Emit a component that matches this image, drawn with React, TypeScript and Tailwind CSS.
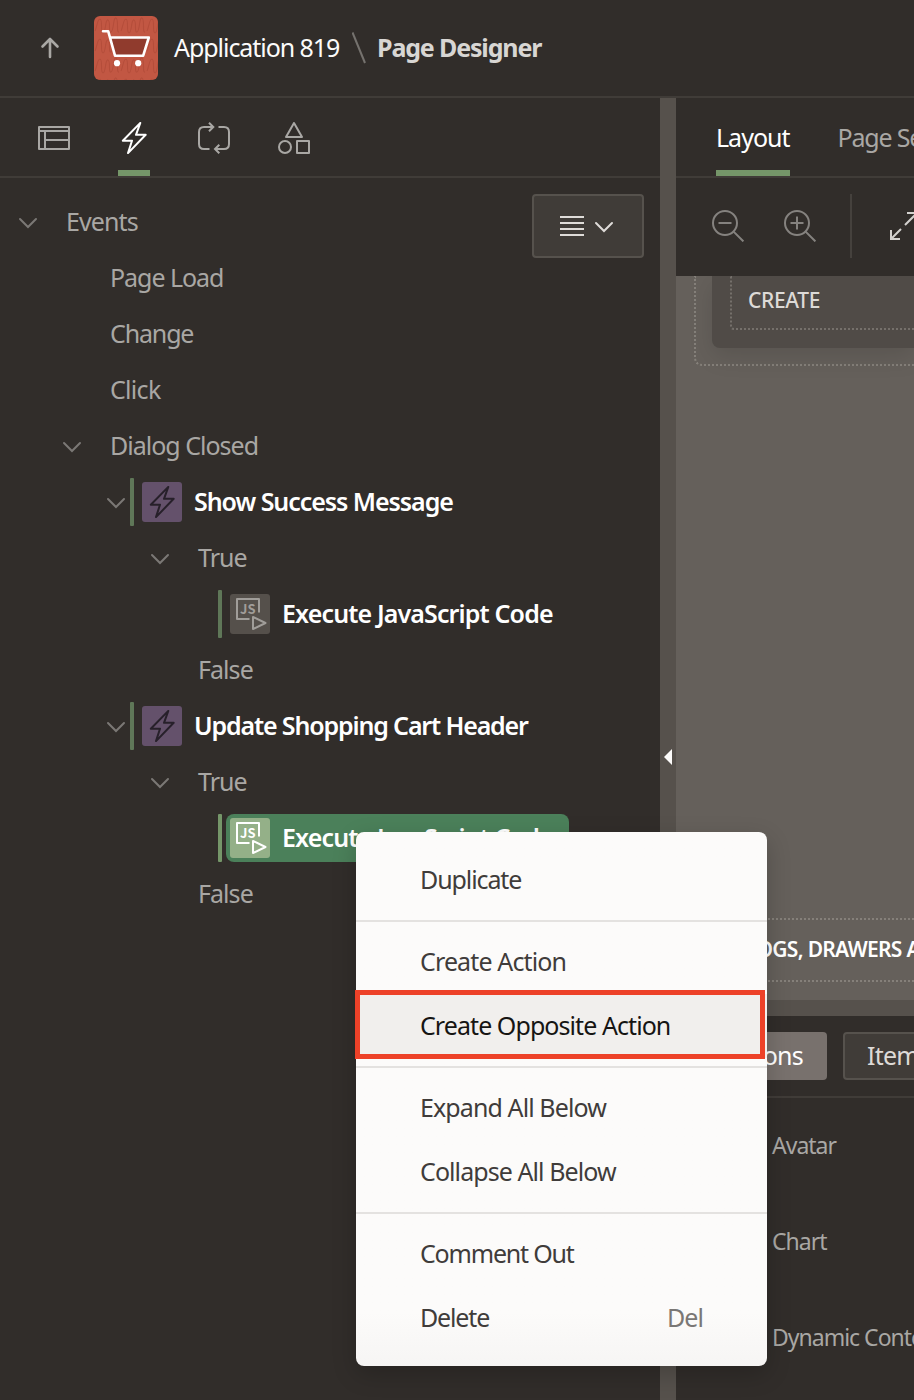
import type { ReactNode } from "react";

function Bolt({ className }: { className: string }) {
  return (
    <svg viewBox="0 0 32 32" className={className} fill="none" stroke="currentColor" strokeWidth="2" strokeLinejoin="round">
      <path d="M22.3.9 18 12.800h9.700L10 31.100l4-12.400H4.800Z" />
    </svg>
  );
}

function LayoutIcon() {
  return (
    <svg viewBox="0 0 32 32" className="size-8" fill="none" stroke="currentColor" strokeWidth="2" strokeLinejoin="round">
      <path d="M1 5h30v22H1ZM1 9h30M7 9v18M7 18h24" />
    </svg>
  );
}

function LoopIcon() {
  return (
    <svg viewBox="0 0 32 32" className="size-8" fill="none" stroke="currentColor" strokeWidth="2">
      <path d="M15 5H6Q1 5 1 10v12q0 5 5 5h5.500M11 .700 15.300 5 11 9.300M20.500 5H26q5 0 5 5v12q0 5-5 5h-9M21.300 22.700 17 27l4.300 4.300" />
    </svg>
  );
}

function ShapesIcon() {
  return (
    <svg viewBox="0 0 32 32" className="size-8" fill="none" stroke="currentColor" strokeWidth="2" strokeLinejoin="round">
      <path d="m16 1 8 14H8ZM19 19h12v12H19Z" />
      <circle cx="7" cy="25" r="6" />
    </svg>
  );
}

function Chevron({ className = "" }: { className?: string }) {
  return (
    <svg viewBox="0 0 20 12" className={`h-3 w-5 shrink-0 ${className}`} fill="none" stroke="currentColor" strokeWidth="2" strokeLinecap="round">
      <path d="m2 2 8 8 8-8" />
    </svg>
  );
}

function CartTile() {
  return (
    <svg viewBox="0 0 64 64" className="size-16 rounded-md bg-[#c25743]">
      <defs>
        <pattern id="grain" width="26" height="20" patternUnits="userSpaceOnUse">
          <path
            d="M1 15c2-3 2-12 5-12s0 14 3 14 2-14 5-13 0 13 3 12 2-15 5-14 0 15 3 14"
            fill="none"
            stroke="#b54d3a"
            strokeWidth="1.200"
          />
        </pattern>
      </defs>
      <rect width="64" height="64" fill="url(#grain)" />
      <path d="M15 21.500h39.500L49 39.500H21Z" fill="#903b2d" />
      <path
        d="M9 15.200h5.200L21 39.700h28.200l5.600-18.200H16.500"
        fill="none"
        stroke="#fff"
        strokeWidth="2.600"
        strokeLinecap="round"
        strokeLinejoin="round"
      />
      <circle cx="23" cy="47.200" r="3.100" fill="#fff" />
      <circle cx="44.200" cy="47.200" r="3.100" fill="#fff" />
    </svg>
  );
}

function ScriptTile({ className }: { className: string }) {
  return (
    <svg viewBox="0 0 40 40" className={`size-10 shrink-0 rounded-[3px] ${className}`} fill="none" stroke="currentColor" strokeWidth="2" strokeLinejoin="round">
      <path d="M29 18.500V5H7v20h12.500M23 23v12l12.500-6Z" />
      <text x="10" y="20" className="font-['Noto_Sans_CJK_SC',sans-serif] text-[13px] font-bold" fill="currentColor" stroke="none">
        JS
      </text>
    </svg>
  );
}

function BoltTile() {
  return (
    <div className="flex size-10 shrink-0 items-center justify-center rounded-[3px] bg-[#64516b]">
      <Bolt className="size-8 text-[#27202a]" />
    </div>
  );
}

function Zoom({ plus }: { plus?: boolean }) {
  return (
    <svg viewBox="0 0 32 32" className="size-8 shrink-0 text-[#85827f]" fill="none" stroke="currentColor" strokeWidth="2">
      <circle cx="13" cy="13" r="12" />
      <path d="m21.600 21.600 9.800 9.800M6.500 13h13" />
      {plus && <path d="M13 6.500v13" />}
    </svg>
  );
}

function Row({ indent, open, children }: { indent: string; open?: boolean; children: ReactNode }) {
  return (
    <div className={`flex h-14 items-center ${indent}`}>
      <div className="flex w-5 shrink-0 justify-center">{open && <Chevron className="mt-0.5 text-[#7b7875]" />}</div>
      {children}
    </div>
  );
}

function Label({ className, children }: { className: string; children: ReactNode }) {
  return <span className={`-mt-0.5 ml-7 ${className}`}>{children}</span>;
}

function Title({ className, children }: { className: string; children: ReactNode }) {
  return <span className={`-mt-0.5 ml-3 font-semibold text-white ${className}`}>{children}</span>;
}

function Bar({ className }: { className: string }) {
  return <div className={`ml-1 h-12 w-1 shrink-0 rounded-[1px] ${className}`} />;
}

function Tree() {
  return (
    <div className="flex flex-col">
      <Row indent="pl-[18px]" open><Label className="tracking-[-0.9px]">Events</Label></Row>
      <Row indent="pl-[62px]"><Label className="tracking-[-1.05px]">Page Load</Label></Row>
      <Row indent="pl-[62px]"><Label className="tracking-[-1.15px]">Change</Label></Row>
      <Row indent="pl-[62px]"><Label className="tracking-[-0.7px]">Click</Label></Row>
      <Row indent="pl-[62px]" open><Label className="tracking-[-1px]">Dialog Closed</Label></Row>
      <Row indent="pl-[106px]" open>
        <Bar className="mr-2 bg-[#5f7758]" />
        <BoltTile />
        <Title className="tracking-[-1.05px]">Show Success Message</Title>
      </Row>
      <Row indent="pl-[150px]" open><Label className="tracking-[-1px]">True</Label></Row>
      <Row indent="pl-[194px]">
        <Bar className="mr-2 bg-[#5f7758]" />
        <ScriptTile className="bg-[#55504b] text-[#a09d99]" />
        <Title className="tracking-[-0.87px]">Execute JavaScript Code</Title>
      </Row>
      <Row indent="pl-[150px]"><Label className="tracking-[-0.95px]">False</Label></Row>
      <Row indent="pl-[106px]" open>
        <Bar className="mr-2 bg-[#5f7758]" />
        <BoltTile />
        <Title className="tracking-[-1.15px]">Update Shopping Cart Header</Title>
      </Row>
      <Row indent="pl-[150px]" open><Label className="tracking-[-1px]">True</Label></Row>
      <Row indent="pl-[194px]">
        <Bar className="mr-1 bg-[#759669]" />
        <div className="flex h-12 w-[343px] shrink-0 items-center rounded-lg bg-[#4b805a] pl-1">
          <ScriptTile className="bg-[#94b088] text-white" />
          <Title className="tracking-[-0.87px]">Execute JavaScript Code</Title>
        </div>
      </Row>
      <Row indent="pl-[150px]"><Label className="tracking-[-0.95px]">False</Label></Row>
    </div>
  );
}

function Item({ label, tracking, hint, active }: { label: string; tracking: string; hint?: string; active?: boolean }) {
  return (
    <div className={`flex h-16 items-center justify-between px-16 pb-0.5 ${active ? "bg-[#f1efed] text-[#161513]" : ""}`}>
      <span className={tracking}>{label}</span>
      {hint && <span className="tracking-[-0.9px] text-[#7a7775]">{hint}</span>}
    </div>
  );
}

function Separator() {
  return <div className="my-2 h-0.5 bg-[#e4e2e0]" />;
}

function ContextMenu() {
  return (
    <div className="absolute left-[356px] top-[832px] w-[411px] rounded-lg bg-[#fcfbfa] bg-linear-to-b from-[#fcfbfa] from-90% to-[#f6f5f4] py-4 text-[#403c3a] shadow-[0_8px_24px_rgba(0,0,0,0.2)]">
      <Item label="Duplicate" tracking="tracking-[-1.1px]" />
      <Separator />
      <Item label="Create Action" tracking="tracking-[-0.87px]" />
      <Item label="Create Opposite Action" tracking="tracking-[-0.93px]" active />
      <Separator />
      <Item label="Expand All Below" tracking="tracking-[-0.9px]" />
      <Item label="Collapse All Below" tracking="tracking-[-0.92px]" />
      <Separator />
      <Item label="Comment Out" tracking="tracking-[-1.2px]" />
      <Item label="Delete" tracking="tracking-[-1.15px]" hint="Del" />
      <div className="absolute -left-px top-[158px] h-[69px] w-[410px] border-[5px] border-[#ed4128]" />
    </div>
  );
}

export default function App() {
  return (
    <div className="relative flex h-[1400px] w-[914px] flex-col overflow-hidden bg-[#312d2a] font-['Noto_Sans',sans-serif] text-[25px] leading-8 text-[#a9a7a4]">
      <header className="flex h-[98px] shrink-0 items-center whitespace-nowrap border-b-2 border-[#403c38]">
        <svg viewBox="0 0 20 22" className="ml-10 h-[22px] w-5 shrink-0" fill="none" stroke="currentColor" strokeWidth="2.600" strokeLinecap="round" strokeLinejoin="round">
          <path d="M10 20V2M2.500 9.500 10 2l7.500 7.500" />
        </svg>
        <div className="ml-[34px] shrink-0"><CartTile /></div>
        <div className="-mt-0.5 ml-4 w-[178px] tracking-[-1.05px] text-[#fcfbfa]">Application 819</div>
        <svg viewBox="0 0 16 32" className="h-8 w-4 shrink-0 text-[#75726e]" fill="none" stroke="currentColor" strokeWidth="2">
          <path d="M.500.500 13 31" />
        </svg>
        <div className="-mt-0.5 ml-[9px] font-bold tracking-[-1.15px] text-[#d8d6d3]">Page Designer</div>
      </header>

      <div className="flex min-h-0 flex-1">
        <aside className="flex w-[660px] shrink-0 flex-col">
          <nav className="flex h-20 shrink-0 gap-12 border-b-2 border-[#403c38] pl-[38px]">
            <div className="pt-6"><LayoutIcon /></div>
            <div className="flex flex-col justify-between pt-6 text-white">
              <Bolt className="size-8" />
              <div className="h-1.5 bg-[#759669]" />
            </div>
            <div className="pt-6"><LoopIcon /></div>
            <div className="pt-6"><ShapesIcon /></div>
          </nav>
          <div className="flex pt-4">
            <div className="w-[532px] shrink-0 whitespace-nowrap"><Tree /></div>
            <button className="flex h-16 w-28 shrink-0 items-center gap-[10px] rounded-[4px] border-2 border-[#56524d] bg-[#403c38] pl-[26px] text-[#dfdcd9]">
              <svg viewBox="0 0 24 20" className="h-5 w-6" stroke="currentColor" strokeWidth="2">
                <path d="M0 1h24M0 7h24M0 13h24M0 19h24" />
              </svg>
              <Chevron className="mt-[2px]" />
            </button>
          </div>
        </aside>

        <div className="w-4 shrink-0 bg-[#56514c] pl-1 pt-[651px]">
          <svg viewBox="0 0 8 16" className="h-4 w-2" fill="#fcfbfa">
            <path d="M8 0v16L0 8Z" />
          </svg>
        </div>

        <main className="flex min-w-0 flex-1 flex-col">
          <nav className="flex h-20 shrink-0 gap-12 whitespace-nowrap border-b-2 border-[#403c38] pl-10">
            <div className="flex w-[74px] flex-col justify-between pt-[23px] tracking-[-0.98px] text-white">
              Layout
              <div className="h-1.5 bg-[#759669]" />
            </div>
            <div className="pt-[23px] tracking-[-1.2px]">Page Search</div>
          </nav>
          <div className="flex h-[98px] shrink-0 items-center pb-0.5 pl-9">
            <Zoom />
            <div className="ml-10 shrink-0"><Zoom plus /></div>
            <div className="ml-[34px] h-16 w-0.5 shrink-0 bg-[#45413d]" />
            <svg viewBox="0 0 28 28" className="ml-[38px] h-7 w-7 shrink-0 text-[#d3d1ce]" fill="none" stroke="currentColor" strokeWidth="2">
              <path d="M1 18v9h9M1.500 26.500 11 17M17 1h10v9M26.500 1.500 15 13" />
            </svg>
          </div>
          <section className="flex h-[724px] shrink-0 flex-col overflow-hidden bg-[#65605b]">
            <div className="ml-[18px] h-[90px] shrink-0 rounded-bl-lg border-b-2 border-l-2 border-dotted border-[#85807a] pl-4">
              <div className="h-[72px] rounded-bl-lg bg-[#504b47] pl-[18px] shadow-[0_8px_24px_rgba(0,0,0,0.12)]">
                <div className="h-[54px] rounded-bl-sm border-b-2 border-l-2 border-dotted border-[#75706b] pl-4 pt-2 text-[21px] font-medium tracking-[-0.35px] text-[#dddad7]">CREATE</div>
              </div>
            </div>
            <div className="mt-[552px] flex h-16 shrink-0 items-center overflow-hidden whitespace-nowrap border-y-2 border-dotted border-[#85807a] pb-[3px] pl-[35px] text-[21px] font-semibold tracking-[-0.7px] text-white">
              <span>DIALOGS, DRAWERS AND POPUPS</span>
            </div>
          </section>
          <div className="h-4 shrink-0 bg-[#56514c]" />
          <div className="flex h-[82px] shrink-0 gap-4 border-b-2 border-[#403c38] pl-4 pt-4 tracking-[-0.75px]">
            <div className="flex h-12 w-[135px] shrink-0 items-center justify-end rounded-[4px] bg-[#78716d] pb-0.5 pr-6 text-white">Regions</div>
            <div className="flex h-12 w-28 shrink-0 items-center rounded-[4px] border-2 border-[#56524d] bg-[#403c38] pb-0.5 pl-[22px] text-[#dddad7]">Items</div>
          </div>
          <div className="flex flex-col whitespace-nowrap pl-24 text-[23px] tracking-[-1px]">
            <div className="flex h-24 items-center pb-0.5">Avatar</div>
            <div className="flex h-24 items-center pb-0.5">Chart</div>
            <div className="flex h-24 items-center pb-0.5">Dynamic Content</div>
          </div>
        </main>
      </div>
      <ContextMenu />
    </div>
  );
}
